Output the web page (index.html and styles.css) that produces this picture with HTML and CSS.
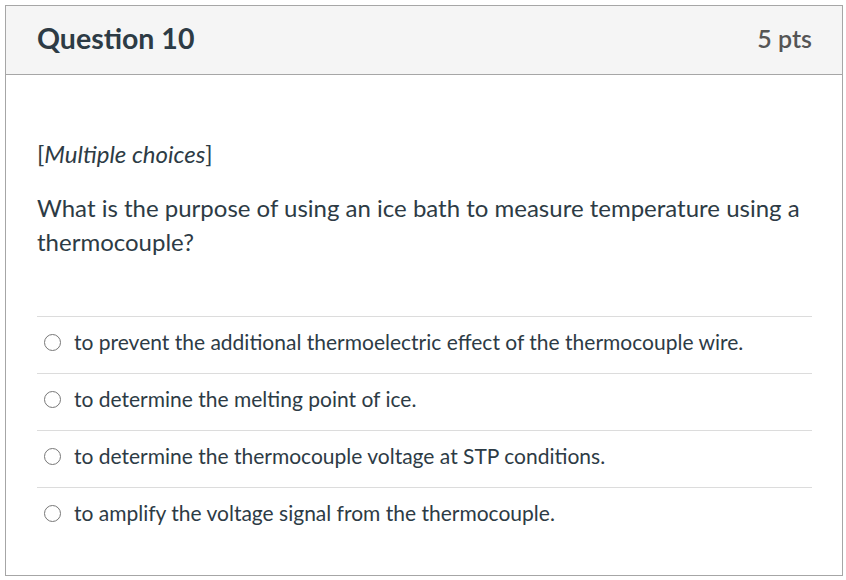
FILE: index.html
```html
<!DOCTYPE html>
<html>
<head>
<meta charset="utf-8">
<link rel="stylesheet" href="styles.css">
</head>
<body>
<div class="question">
  <div class="header">
    <h2 class="title">Question 10</h2>
    <span class="points">5 pts</span>
  </div>
  <div class="content">
    <p class="kind">[<em>Multiple choices</em>]</p>
    <p class="prompt">What is the purpose of using an ice bath to measure temperature using a thermocouple?</p>
    <div class="answers">
      <label class="answer"><span class="radio"></span><span class="text">to prevent the additional thermoelectric effect of the thermocouple wire.</span></label>
      <label class="answer"><span class="radio"></span><span class="text">to determine the melting point of ice.</span></label>
      <label class="answer"><span class="radio"></span><span class="text">to determine the thermocouple voltage at STP conditions.</span></label>
      <label class="answer"><span class="radio"></span><span class="text">to amplify the voltage signal from the thermocouple.</span></label>
    </div>
  </div>
</div>
</body>
</html>
```
FILE: styles.css
```css
html, body {
  margin: 0;
  padding: 0;
  background: #fff;
}
body {
  padding: 5px 3px 4px 5px;
  font-family: Lato, "Liberation Sans", sans-serif;
  color: #2d3b45;
}
.question {
  border: 1px solid #a6a6a6;
  box-sizing: border-box;
  height: 571px;
}
.header {
  display: flex;
  justify-content: space-between;
  align-items: center;
  height: 69px;
  box-sizing: border-box;
  padding: 0 30px 5px 31px;
  background: #f5f5f5;
  border-bottom: 1px solid #a6a6a6;
}
.title {
  margin: 0;
  font-size: 28.5px;
  font-weight: 700;
}
.points {
  font-size: 25px;
  font-weight: 600;
  color: #555;
}
.content {
  padding: 0 30px 0 31px;
}
.kind {
  margin: 64px 0 0;
  font-size: 24px;
  line-height: 30px;
}
.prompt {
  margin: 22px 0 0;
  font-size: 24px;
  line-height: 34px;
}
.answers {
  margin-top: 57px;
}
.answer {
  display: flex;
  align-items: center;
  height: 56px;
  border-top: 1px solid #dcdcdc;
}
.radio {
  flex: none;
  width: 17px;
  height: 17px;
  border: 1.5px solid #777;
  border-radius: 50%;
  margin: 0 13px 5px 7px;
  box-sizing: border-box;
}
.text {
  font-size: 21px;
  margin-bottom: 8px;
}
```
